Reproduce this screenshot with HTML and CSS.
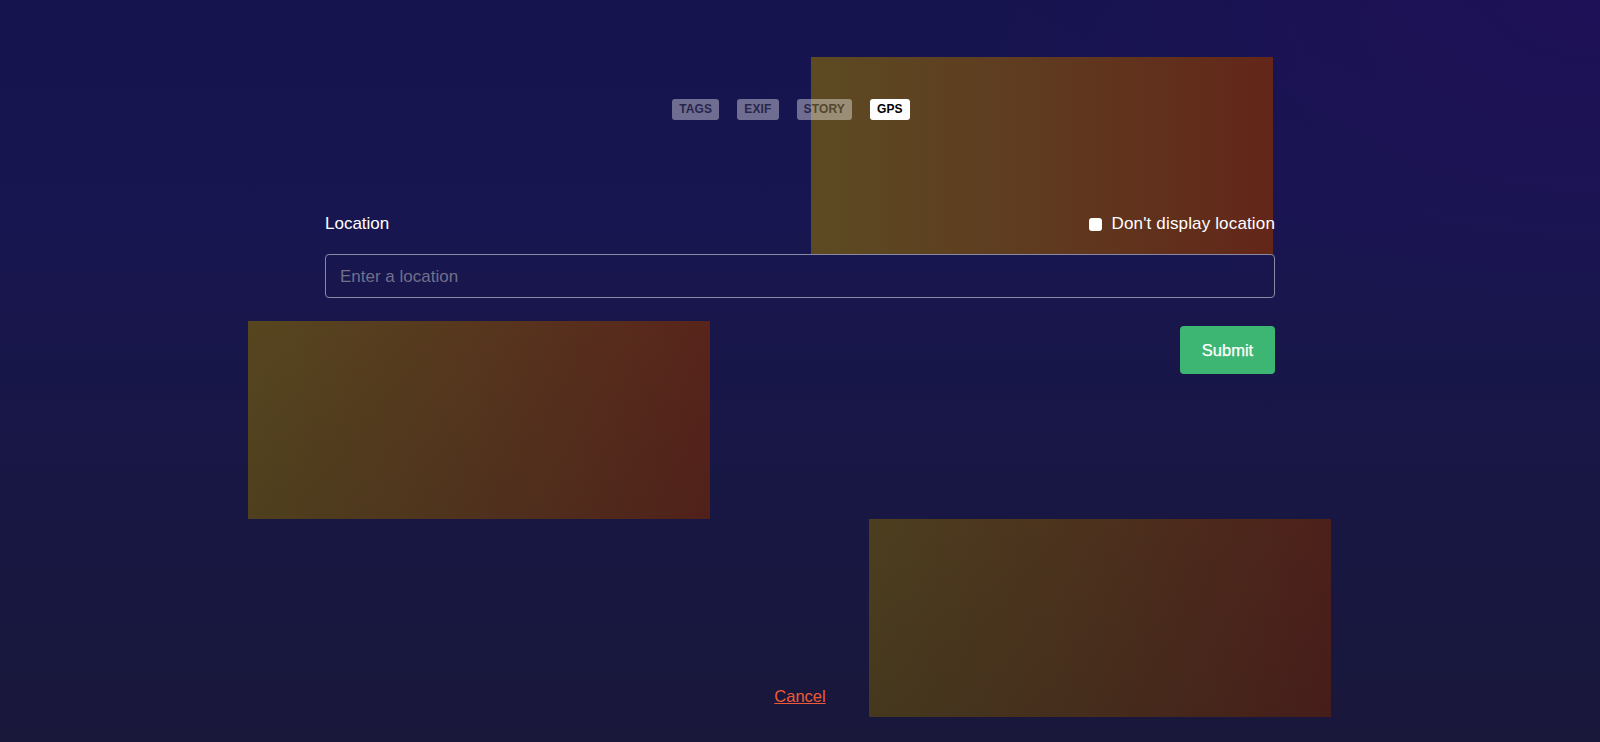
FILE: index.html
```html
<!DOCTYPE html>
<html lang="en">
<head>
<meta charset="utf-8">
<title>Edit photo – GPS</title>
<link rel="stylesheet" href="styles.css">
</head>
<body>
<div class="blob blob-a"></div>
<div class="blob blob-b"></div>
<div class="blob blob-c"></div>
<main class="page">
  <nav class="tabs">
    <span class="tab">Tags</span>
    <span class="tab">Exif</span>
    <span class="tab">Story</span>
    <span class="tab tab-active">GPS</span>
  </nav>
  <form class="form">
    <div class="row">
      <label class="label" for="loc">Location</label>
      <label class="check"><input type="checkbox" class="box"><span>Don't display location</span></label>
    </div>
    <input id="loc" class="field" type="text" placeholder="Enter a location">
    <div class="actions">
      <button type="button" class="submit">Submit</button>
    </div>
  </form>
  <a class="cancel" href="#">Cancel</a>
</main>
</body>
</html>
```

FILE: styles.css
```css
html, body {
  margin: 0;
  padding: 0;
}
body {
  position: relative;
  height: 742px;
  overflow: hidden;
  font-family: "Liberation Sans", Arial, sans-serif;
  color: #fff;
  background:
    radial-gradient(ellipse 900px 500px at 100% 0%, rgba(40, 14, 95, 0.5), rgba(40, 14, 95, 0) 70%),
    linear-gradient(180deg, #16144f 0%, #181650 30%, #181744 65%, #19173a 100%);
}

.blob {
  position: absolute;
  width: 462px;
  height: 198px;
  z-index: 0;
}
.blob-a {
  left: 811px;
  top: 57px;
  background: linear-gradient(90deg, #5c4a22 0%, #5f3c20 45%, #632619 100%);
}
.blob-b {
  left: 248px;
  top: 321px;
  background:
    linear-gradient(180deg, rgba(0, 0, 0, 0) 0%, rgba(10, 5, 20, 0.1) 100%),
    linear-gradient(90deg, #56461f 0%, #57381e 45%, #58241b 100%);
}
.blob-c {
  left: 869px;
  top: 519px;
  background:
    linear-gradient(180deg, rgba(0, 0, 0, 0) 0%, rgba(10, 5, 20, 0.1) 100%),
    linear-gradient(90deg, #4c3e1f 0%, #4c321d 45%, #4d201b 100%);
}

.page {
  position: relative;
  z-index: 1;
  display: flex;
  flex-direction: column;
  align-items: center;
  padding-top: 99px;
}

.tabs {
  display: flex;
}
.tab {
  margin-right: 18px;
  height: 21px;
  line-height: 21px;
  padding: 0 7px;
  border-radius: 3px;
  font-size: 12px;
  font-weight: 700;
  letter-spacing: 0.15px;
  text-transform: uppercase;
  background: #fff;
  color: #444;
  opacity: 0.38;
}
.tab-active {
  opacity: 1;
  color: #000;
}

.form {
  width: 950px;
  margin-top: 92px;
}
.row {
  display: flex;
  justify-content: space-between;
  align-items: center;
  height: 24px;
  line-height: 24px;
  font-size: 17px;
}
.check {
  display: flex;
  align-items: center;
  gap: 10px;
  letter-spacing: 0.15px;
}
.box {
  appearance: none;
  -webkit-appearance: none;
  margin: 0;
  width: 13px;
  height: 13px;
  border-radius: 3px;
  background: #fff;
}
.field {
  display: block;
  box-sizing: border-box;
  width: 100%;
  height: 44px;
  margin-top: 18px;
  padding: 2px 14px 0;
  border: 1px solid #8a89a3;
  border-radius: 4px;
  background: transparent;
  color: #fff;
  font-family: inherit;
  font-size: 17px;
  outline: none;
}
.field::placeholder {
  color: #71708a;
}
.actions {
  display: flex;
  justify-content: flex-end;
  margin-top: 28px;
}
.submit {
  width: 95px;
  height: 48px;
  border: none;
  border-radius: 4px;
  background: #3cb672;
  color: #fff;
  font-family: inherit;
  font-size: 16.5px;
  padding: 0;
  -webkit-text-stroke: 0.25px #fff;
}
.cancel {
  margin-top: 310px;
  line-height: 24px;
  font-size: 16.5px;
  color: #ee5a36;
  text-decoration: underline;
}
```
